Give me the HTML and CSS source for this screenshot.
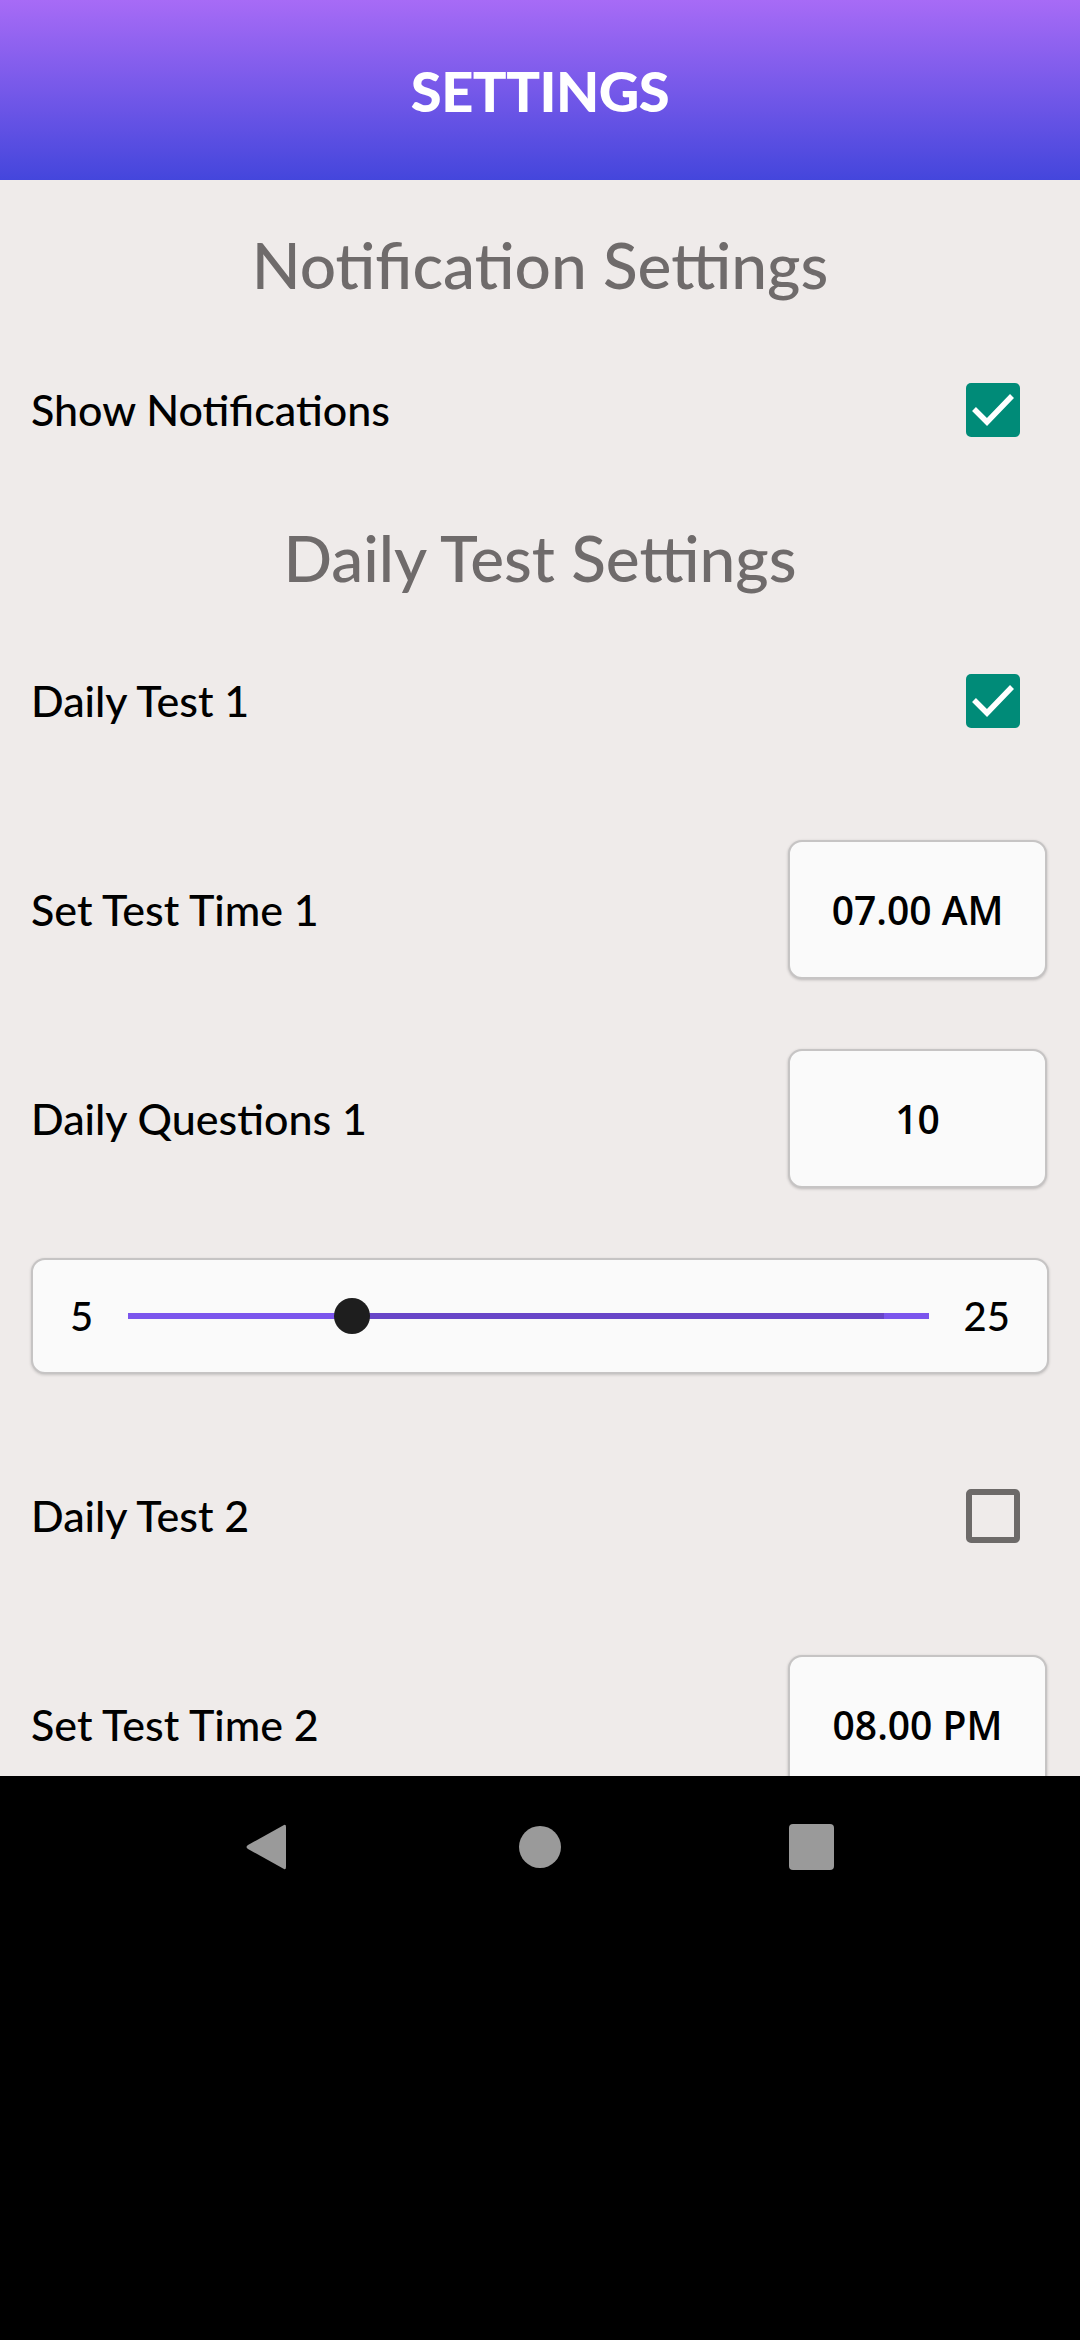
FILE: index.html
```html
<!DOCTYPE html>
<html lang="en">
<head>
<meta charset="utf-8">
<title>Settings</title>
<link rel="stylesheet" href="styles.css">
</head>
<body>
<div class="screen">
  <header class="appbar"><h1 class="appbar-title">SETTINGS</h1></header>
  <main class="content">
    <h2 class="section-title first">Notification Settings</h2>
    <div class="row">
      <span class="label">Show Notifications</span>
      <span class="checkbox checked">
        <svg viewBox="0 0 54 54" width="54" height="54"><path d="M8 26 L21 39 L46 13" fill="none" stroke="#ffffff" stroke-width="5.5"/></svg>
      </span>
    </div>
    <h2 class="section-title second">Daily Test Settings</h2>
    <div class="list">
      <div class="row">
        <span class="label">Daily Test 1</span>
        <span class="checkbox checked">
          <svg viewBox="0 0 54 54" width="54" height="54"><path d="M8 26 L21 39 L46 13" fill="none" stroke="#ffffff" stroke-width="5.5"/></svg>
        </span>
      </div>
      <div class="row">
        <span class="label">Set Test Time 1</span>
        <span class="valuebox">07.00 AM</span>
      </div>
      <div class="row">
        <span class="label">Daily Questions 1</span>
        <span class="valuebox">10</span>
      </div>
      <div class="slider-card">
        <span class="slider-num">5</span>
        <div class="track">
          <div class="track-active" style="width: 27.9%"></div>
          <div class="track-inactive"></div>
          <div class="track-end"></div>
          <div class="thumb" style="left: 27.9%"></div>
        </div>
        <span class="slider-num">25</span>
      </div>
      <div class="row">
        <span class="label">Daily Test 2</span>
        <span class="checkbox unchecked"></span>
      </div>
      <div class="row">
        <span class="label">Set Test Time 2</span>
        <span class="valuebox">08.00 PM</span>
      </div>
    </div>
  </main>
  <nav class="navbar">
    <div class="nav-icons">
      <div class="nav-slot">
        <svg class="nav-back" viewBox="0 0 44 48" width="44" height="48"><path d="M40 2 Q42 1 42 4 L42 44 Q42 47 40 46 L4 26 Q1 24 4 22 Z" fill="#9a9a9a"/></svg>
      </div>
      <div class="nav-slot"><span class="nav-home"></span></div>
      <div class="nav-slot"><span class="nav-recent"></span></div>
    </div>
  </nav>
</div>
</body>
</html>
```

FILE: styles.css
```css
* { box-sizing: border-box; }
html, body {
  margin: 0;
  padding: 0;
  background: #000;
}
body {
  font-family: Lato, "Noto Sans", sans-serif;
}
.screen {
  width: 1080px;
  height: 2340px;
  display: flex;
  flex-direction: column;
  overflow: hidden;
}
.appbar {
  height: 180px;
  flex: 0 0 180px;
  background: linear-gradient(180deg, #a76bf6 0%, #4446dc 100%);
  display: flex;
  align-items: center;
  justify-content: center;
}
.appbar-title {
  margin: 0;
  color: #ffffff;
  font-family: Lato, sans-serif;
  font-weight: 900;
  font-size: 56px;
  letter-spacing: -0.5px;
  line-height: 1;
  padding-top: 2px;
}
.content {
  flex: 0 0 1596px;
  height: 1596px;
  overflow: hidden;
  background: #efebea;
  padding: 40px 31px 0 31px;
}
.section-title {
  margin: 0;
  height: 90px;
  line-height: 90px;
  text-align: center;
  font-family: Lato, sans-serif;
  font-weight: 500;
  font-size: 64px;
  color: #6f6b6b;
}
.section-title.first { margin-bottom: 30px; }
.section-title.second { margin-top: 34px; margin-bottom: 28px; }
.list {
  display: flex;
  flex-direction: column;
  gap: 70px;
}
.row {
  height: 139px;
  display: flex;
  align-items: center;
  justify-content: space-between;
}
.label {
  font-family: Lato, sans-serif;
  font-size: 43px;
  font-weight: 500;
  color: #000;
}
.checkbox {
  width: 54px;
  height: 54px;
  border-radius: 5px;
  margin-right: 29px;
  display: flex;
}
.checkbox.checked { background: #008b78; }
.checkbox.unchecked {
  border: 6px solid #6d6a69;
}
.valuebox {
  width: 259px;
  height: 139px;
  margin-right: 2px;
  background: #fafafa;
  border: 2px solid #c6c4c4;
  border-radius: 14px;
  box-shadow: 0 1px 3px rgba(0, 0, 0, 0.22);
  display: flex;
  align-items: center;
  justify-content: center;
  font-family: "Open Sans", sans-serif;
  font-weight: 600;
  font-size: 39px;
  color: #000;
}
.slider-card {
  height: 116px;
  margin-bottom: 2px;
  background: #fafafa;
  border: 2px solid #c6c4c4;
  border-radius: 14px;
  box-shadow: 0 1px 3px rgba(0, 0, 0, 0.18);
  display: flex;
  align-items: center;
  padding: 0 37px 0 37px;
  gap: 35px;
}
.slider-num {
  font-family: Lato, sans-serif;
  font-size: 40px;
  font-weight: 500;
  color: #000;
}
.track {
  position: relative;
  flex: 1;
  height: 6px;
  display: flex;
}
.track-active { background: #7b55ed; height: 6px; }
.track-inactive { flex: 1; background: #6845c8; height: 6px; }
.track-end { width: 45px; background: #7b55ed; height: 6px; }
.thumb {
  position: absolute;
  top: 50%;
  width: 36px;
  height: 36px;
  border-radius: 50%;
  background: #1e1e1e;
  transform: translate(-50%, -50%);
}
.navbar {
  flex: 1;
  background: #000;
}
.nav-icons {
  height: 142px;
  display: flex;
  align-items: center;
  justify-content: center;
}
.nav-slot {
  width: 271px;
  display: flex;
  align-items: center;
  justify-content: center;
}
.nav-back { margin-left: -6px; }
.nav-home {
  width: 42px;
  height: 42px;
  border-radius: 50%;
  background: #9a9a9a;
}
.nav-recent {
  width: 45px;
  height: 46px;
  border-radius: 4px;
  background: #9a9a9a;
}
```
